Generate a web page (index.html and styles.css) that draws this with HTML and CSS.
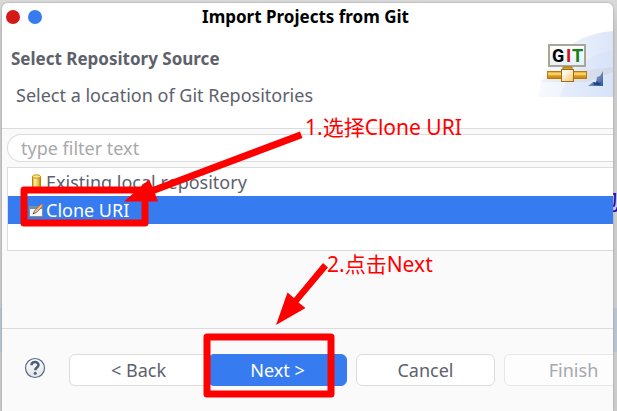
FILE: index.html
```html
<!DOCTYPE html>
<html lang="en">
<head>
<meta charset="utf-8">
<title>Import Projects from Git</title>
<link rel="stylesheet" href="styles.css">
</head>
<body>
<div class="backdrop-band"></div>
<span class="backdrop-text" lang="zh">包</span>
<main class="dialog">
  <header class="titlebar">
    <div class="window-controls">
      <button class="dot dot-close" aria-label="Close"></button>
      <button class="dot dot-max" aria-label="Maximize"></button>
    </div>
    <h1 class="title">Import Projects from Git</h1>
  </header>
  <section class="banner">
    <div class="banner-text">
      <h2 class="heading">Select Repository Source</h2>
      <p class="message">Select a location of Git Repositories</p>
    </div>
    <svg class="banner-art" viewBox="0 0 75 66" width="75" height="66" aria-hidden="true">
      <defs>
        <linearGradient id="sky" x1="0" y1="0" x2="1" y2="0"><stop offset="0" stop-color="#f8faff"/><stop offset="1" stop-color="#dce6f9"/></linearGradient>
        <linearGradient id="gold" x1="0" y1="0" x2="0" y2="1"><stop offset="0" stop-color="#d9980c"/><stop offset=".35" stop-color="#ffe08a"/><stop offset=".6" stop-color="#e2a01c"/><stop offset="1" stop-color="#c47d08"/></linearGradient>
        <linearGradient id="node" x1="0" y1="0" x2="1" y2="1"><stop offset=".2" stop-color="#fffdf5"/><stop offset="1" stop-color="#f2c565"/></linearGradient>
        <linearGradient id="sign" x1="0" y1="0" x2="0" y2="1"><stop offset="0" stop-color="#fff"/><stop offset="1" stop-color="#e3f0f8"/></linearGradient>
        <linearGradient id="shade" x1="0" y1="0" x2="1" y2="0"><stop offset="0" stop-color="#dde0e6" stop-opacity=".3"/><stop offset="1" stop-color="#d3d9e6"/></linearGradient>
        <linearGradient id="corner" x1="0" y1="0" x2="1" y2="1"><stop offset="0" stop-color="#b7c8e4"/><stop offset="1" stop-color="#31578f"/></linearGradient>
      </defs>
      <path d="M0 66C4 34 30 3 75 0V66Z" fill="url(#sky)"/>
      <path d="M22 66C29 42 48 23 75 20V66Z" fill="#cadafa" opacity=".25"/>
      <path d="M1 51 18 43 75 36V41L50 51Z" fill="url(#shade)"/>
      <rect x="11" y="14" width="36" height="21" fill="url(#sign)" stroke="#a9a794" stroke-width="2"/>
      <text class="art-letter" x="14" y="31" fill="#000">G</text>
      <text class="art-letter" x="28" y="31" fill="#d4101c">I</text>
      <text class="art-letter" x="34" y="31" fill="#128012">T</text>
      <path d="M25 36H34V39H25Z" fill="#dca02a" stroke="#a87512"/>
      <rect x="9.500" y="40.500" width="39" height="7" fill="url(#gold)" stroke="#b57a13"/>
      <rect x="23.500" y="38.500" width="12" height="12" fill="url(#node)" stroke="#a46b12"/>
      <path d="M65 40V55H50L55 51 58 51 59 46 62 45Z" fill="url(#corner)"/>
      <path d="M56 54l-1-3 3 1 1-2 2 2 2-1-1 3Z" fill="#1e4788"/>
    </svg>
  </section>
  <section class="content">
    <input class="filter" type="text" placeholder="type filter text" aria-label="Filter">
    <ul class="sources" role="listbox" aria-label="Repository sources">
      <li class="source" role="option" aria-selected="false">
        <svg class="source-icon" viewBox="0 0 16 16" width="16" height="16" aria-hidden="true">
          <defs><linearGradient id="cyl" x1="0" y1="0" x2="1" y2="0"><stop offset="0" stop-color="#e0a518"/><stop offset=".3" stop-color="#fff2a8"/><stop offset=".7" stop-color="#eec03c"/><stop offset="1" stop-color="#bd8008"/></linearGradient></defs>
          <path d="M4.500 2.500V13C4.500 15.300 12.500 15.300 12.500 13V2.500Z" fill="url(#cyl)" stroke="#b9850f"/>
          <ellipse cx="8.500" cy="2.500" rx="4" ry="1.700" fill="#fbe68a" stroke="#c3921a"/>
        </svg>
        Existing local repository
      </li>
      <li class="source source-selected" role="option" aria-selected="true">
        <svg class="source-icon" viewBox="0 0 16 16" width="16" height="16" aria-hidden="true">
          <rect x="1.500" y="4.500" width="13" height="10" fill="#f5f9f7" stroke="#8b8f7c"/>
          <path d="M2 5H14V7H2Z" fill="#5b92c9"/>
          <path d="M5.500 11.500 6.500 8.500 13 2 15 4 8.500 10.500Z" fill="#e9b47c" stroke="#8a6246" stroke-width=".8"/>
          <path d="M12.500 2.500 13.500 1.500 15.500 3.500 14.500 4.500Z" fill="#cf7660"/>
          <path d="M4.500 12.500 5.500 10.500 6.500 11.500Z" fill="#222"/>
        </svg>
        Clone URI
      </li>
    </ul>
  </section>
  <footer class="footer">
    <button class="help" aria-label="Help">
      <svg viewBox="0 0 22 22" width="22" height="22" aria-hidden="true">
        <defs><linearGradient id="helpFill" x1="0" y1="0" x2="0" y2="1"><stop offset="0" stop-color="#fff"/><stop offset="1" stop-color="#e3e3e3"/></linearGradient></defs>
        <circle cx="11" cy="11" r="9.500" fill="url(#helpFill)" stroke="#566a88" stroke-width="1.200"/>
        <path d="M7.500 8.300C7.500 4 14.500 4 14.500 8C14.500 10.500 11.200 10.500 11.200 13.300" fill="none" stroke="#4b5d7e" stroke-width="2.500"/>
        <circle cx="11.200" cy="16.300" r="1.500" fill="#4b5d7e"/>
      </svg>
    </button>
    <div class="pair">
      <button class="btn">&lt; Back</button>
      <button class="btn btn-primary">Next &gt;</button>
    </div>
    <button class="btn">Cancel</button>
    <button class="btn" disabled>Finish</button>
  </footer>
</main>
<svg class="marks" viewBox="0 0 617 411" width="617" height="411" aria-hidden="true">
  <g fill="none" stroke="#f00" stroke-width="7" stroke-linejoin="round">
    <rect x="24" y="190" width="121" height="33"/>
    <rect x="207" y="337" width="124" height="57"/>
  </g>
  <g fill="#f00">
    <path d="M300 131.500 302.500 138 155 193.500 158 201.500 124 201.500 149 179.500 152.500 187Z"/>
    <path d="M323 263 328 267.500 298.500 302.500 305.500 308 276 325 287.500 292.500 294 298Z"/>
  </g>
</svg>
<p class="note note-clone" lang="zh">1.选择Clone URI</p>
<p class="note note-next" lang="zh">2.点击Next</p>
</body>
</html>
```
FILE: styles.css
```css
* {
  box-sizing: border-box;
}

body {
  margin: 0;
  min-height: 100vh;
  display: flex;
  position: relative;
  overflow: hidden;
  background: linear-gradient(#d9d9d9, #cbcbcb 30px);
  color: #5c616c;
  font: 18px/28px "Noto Sans", "Noto Sans CJK SC", sans-serif;
}

.backdrop-band {
  position: absolute;
  top: 308px;
  left: 0;
  right: 0;
  height: 44px;
  background: #b8c3ce;
}

.backdrop-text {
  position: absolute;
  top: 187px;
  left: 595px;
  color: #2b00b8;
  font-size: 24px;
}

.dialog {
  position: relative;
  flex: 1;
  min-width: 0;
  display: flex;
  flex-direction: column;
  margin: 3px 4px 0 2px;
  overflow: hidden;
  border-radius: 6px 6px 0 0;
  background: #fafafa;
  box-shadow: 0 0 2px #888;
}

.titlebar {
  display: grid;
  grid-template-columns: 1fr auto 1fr;
  align-items: center;
  height: 28px;
  padding: 0 8px 0 4px;
  background: #fff;
}

.window-controls {
  display: flex;
  gap: 8px;
}

.dot {
  width: 14px;
  height: 14px;
  padding: 0;
  border: 0;
  border-radius: 50%;
}

.dot-close {
  background: #d41919;
}

.dot-max {
  background: #367bf0;
}

.title {
  margin: 0;
  color: #000;
  font-size: 17px;
  font-weight: bold;
}

.banner {
  display: flex;
  justify-content: space-between;
  height: 98px;
  border-bottom: 1px solid #dcdcdc;
  background: #fff;
}

.banner-text {
  padding: 14px 0 0 9px;
}

.heading {
  margin: 0;
  font-size: 17px;
  font-weight: bold;
}

.message {
  margin: 8px 0 0 5px;
}

.content {
  flex: 1;
  padding: 5px 0 0 5px;
}

.filter {
  display: block;
  width: 100%;
  height: 28px;
  padding: 0 13px;
  border: 1px solid #dcdcdc;
  border-right: 0;
  border-radius: 14px 0 0 14px;
  background: #fff;
  color: #5c616c;
  font: inherit;
}

.filter::placeholder {
  color: #a8a8a8;
}

.sources {
  height: 84px;
  margin: 5px 0 0;
  padding: 0;
  border: 1px solid #dcdcdc;
  border-right: 0;
  background: #fff;
  list-style: none;
}

.source {
  display: flex;
  align-items: center;
  gap: 2px;
  height: 28px;
  padding-left: 20px;
}

.source-selected {
  background: #367bf0;
  color: #fff;
}

.footer {
  display: flex;
  align-items: center;
  gap: 9px;
  height: 83px;
  padding-left: 22px;
  border-top: 1px solid #dcdcdc;
}

.help {
  display: flex;
  flex: none;
  margin: 0 14px 4px 0;
  padding: 0;
  border: 0;
  background: none;
}

.pair {
  display: flex;
  flex: none;
}

.btn {
  flex: none;
  width: 139px;
  height: 32px;
  padding: 0;
  border: 1px solid #dcdcdc;
  border-radius: 6px;
  background: #fff;
  color: #5c616c;
  font: inherit;
}

.btn-primary {
  border-color: #367bf0;
  background: #367bf0;
  color: #fff;
}

.btn:disabled {
  border-color: #e8e8e8;
  background: #fdfdfd;
  color: #a5a8ae;
}

.art-letter {
  font: bold 18px Roboto, sans-serif;
}

.marks {
  position: absolute;
  top: 0;
  left: 0;
}

.note {
  position: absolute;
  margin: 0;
  color: #f00;
  font-size: 21px;
  white-space: nowrap;
}

.note-clone {
  top: 113px;
  left: 305px;
}

.note-next {
  top: 250px;
  left: 327px;
}
```
